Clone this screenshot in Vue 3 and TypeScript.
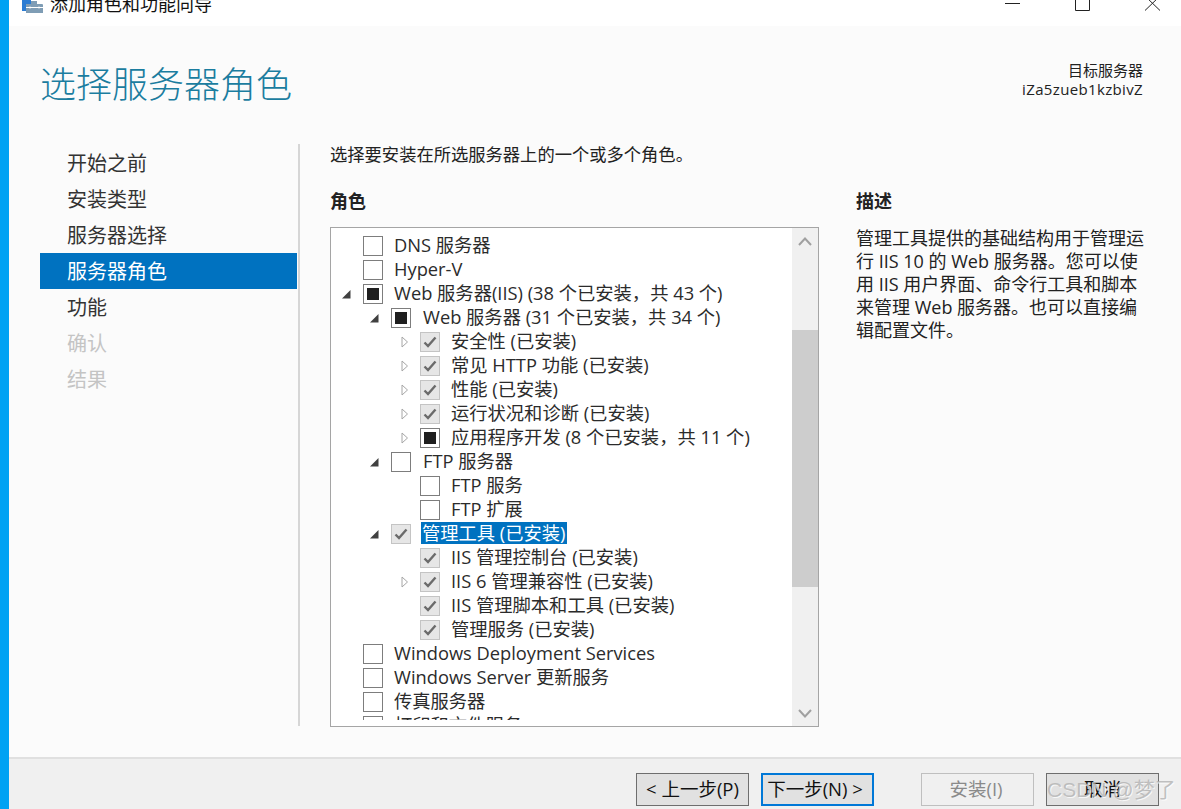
<script setup lang="ts">
type Row = { label: string; level: number; arrow?: 'open' | 'closed'; state: 'empty' | 'partial' | 'checked'; selected?: boolean }
const steps = [
  { t: '开始之前' }, { t: '安装类型' }, { t: '服务器选择' }, { t: '服务器角色', active: true },
  { t: '功能' }, { t: '确认', disabled: true }, { t: '结果', disabled: true },
]
const rows: Row[] = [
  { label: 'DNS 服务器', level: 0, state: 'empty' },
  { label: 'Hyper-V', level: 0, state: 'empty' },
  { label: 'Web 服务器(IIS) (38 个已安装，共 43 个)', level: 0, arrow: 'open', state: 'partial' },
  { label: 'Web 服务器 (31 个已安装，共 34 个)', level: 1, arrow: 'open', state: 'partial' },
  { label: '安全性 (已安装)', level: 2, arrow: 'closed', state: 'checked' },
  { label: '常见 HTTP 功能 (已安装)', level: 2, arrow: 'closed', state: 'checked' },
  { label: '性能 (已安装)', level: 2, arrow: 'closed', state: 'checked' },
  { label: '运行状况和诊断 (已安装)', level: 2, arrow: 'closed', state: 'checked' },
  { label: '应用程序开发 (8 个已安装，共 11 个)', level: 2, arrow: 'closed', state: 'partial' },
  { label: 'FTP 服务器', level: 1, arrow: 'open', state: 'empty' },
  { label: 'FTP 服务', level: 2, state: 'empty' },
  { label: 'FTP 扩展', level: 2, state: 'empty' },
  { label: '管理工具 (已安装)', level: 1, arrow: 'open', state: 'checked', selected: true },
  { label: 'IIS 管理控制台 (已安装)', level: 2, state: 'checked' },
  { label: 'IIS 6 管理兼容性 (已安装)', level: 2, arrow: 'closed', state: 'checked' },
  { label: 'IIS 管理脚本和工具 (已安装)', level: 2, state: 'checked' },
  { label: '管理服务 (已安装)', level: 2, state: 'checked' },
  { label: 'Windows Deployment Services', level: 0, state: 'empty' },
  { label: 'Windows Server 更新服务', level: 0, state: 'empty' },
  { label: '传真服务器', level: 0, state: 'empty' },
  { label: '打印和文件服务', level: 0, state: 'empty' },
]
</script>

<template>
  <div class="window">
    <header class="titlebar">
      <svg class="appicon" width="24" height="15" viewBox="0 0 24 15">
        <rect x="0" y="0" width="9" height="12" fill="#2b7cd3" />
        <path d="M4 5 h5 v-3 h6 v3 h5 a1 1 0 0 1 1 1 v8 h-17 z" fill="#7f9db5" />
        <path d="M4 8.500 h17" stroke="#fff" stroke-width="1" />
        <path d="M8 7.500 v2 M17 7.500 v2" stroke="#fff" stroke-width="1" />
      </svg>
      <span class="wintitle">添加角色和功能向导</span>
      <div class="controls">
        <svg width="16" height="12" viewBox="0 0 16 12"><path d="M2 3.500 h15" stroke="#222" fill="none" /></svg>
        <svg width="16" height="12" viewBox="0 0 16 12"><path d="M1.500 -4 h14 v14.500 h-14 z" stroke="#222" fill="none" /></svg>
        <svg width="16" height="12" viewBox="0 0 16 12"><path d="M0 -4 L15 10.500 M15 -4 L0 10.500" stroke="#222" fill="none" /></svg>
      </div>
    </header>

    <section class="head">
      <h1>选择服务器角色</h1>
      <div class="target">
        <div>目标服务器</div>
        <div class="server-id">iZa5zueb1kzbivZ</div>
      </div>
    </section>

    <main class="body">
      <nav class="steps">
        <div v-for="s in steps" :key="s.t" class="step" :class="{ active: s.active, disabled: s.disabled }">{{ s.t }}</div>
      </nav>
      <div class="content">
        <p class="intro">选择要安装在所选服务器上的一个或多个角色。</p>
        <div class="cols">
          <div class="rolecol">
            <h2>角色</h2>
            <div class="tree">
              <div class="rows">
                <div v-for="r in rows" :key="r.label" class="row" :class="'lv' + r.level">
                  <span class="arrow">
                    <svg v-if="r.arrow === 'open'" width="10" height="10" viewBox="0 0 10 10"><path d="M9.500 1 V9.500 H1 Z" fill="#404040" /></svg>
                    <svg v-else-if="r.arrow === 'closed'" class="closed" width="8" height="12" viewBox="0 0 8 12"><path d="M1 1 L6.500 6 L1 11 Z" fill="#fff" stroke="#a6a6a6" /></svg>
                  </span>
                  <span class="box" :class="r.state">
                    <i v-if="r.state === 'partial'" class="fill"></i>
                    <svg v-else-if="r.state === 'checked'" width="14" height="12" viewBox="0 0 14 12"><path d="M1.500 6.500 L5 10 L12.500 1.500" stroke="#6b6b6b" stroke-width="2.400" fill="none" /></svg>
                  </span>
                  <span class="label" :class="{ selected: r.selected }">{{ r.label }}</span>
                </div>
              </div>
              <div class="scroll">
                <div class="sbtn"><svg width="14" height="9" viewBox="0 0 14 9"><path d="M1 8 L7 1.500 L13 8" stroke="#a0a0a0" stroke-width="2" fill="none" /></svg></div>
                <div class="track"><div class="thumb"></div></div>
                <div class="sbtn"><svg width="14" height="9" viewBox="0 0 14 9"><path d="M1 1 L7 7.500 L13 1" stroke="#a0a0a0" stroke-width="2" fill="none" /></svg></div>
              </div>
            </div>
          </div>
          <div class="desc">
            <h2>描述</h2>
            <p>管理工具提供的基础结构用于管理运行 IIS 10 的 Web 服务器。您可以使用 IIS 用户界面、命令行工具和脚本来管理 Web 服务器。也可以直接编辑配置文件。</p>
          </div>
        </div>
      </div>
    </main>

    <footer class="foot">
      <button class="btn">&lt; 上一步(P)</button>
      <button class="btn default">下一步(N) &gt;</button>
      <button class="btn off">安装(I)</button>
      <button class="btn">取消</button>
      <span class="watermark">CSDN @梦了</span>
    </footer>
  </div>
</template>

<style>
html, body { margin: 0; overflow: hidden; }
</style>

<style scoped>
.window {
  width: 1181px;
  height: 809px;
  box-sizing: border-box;
  border-left: 9px solid #00a2f3;
  display: flex;
  flex-direction: column;
  background: #fbfbfb;
  color: #1a1a1a;
  font-family: "Open Sans", "Noto Sans CJK SC", sans-serif;
  overflow: hidden;
}
.titlebar {
  height: 26px;
  flex: none;
  background: #fff;
  display: flex;
  align-items: flex-end;
  padding-left: 13px;
  overflow: hidden;
  position: relative;
}
.appicon { margin-bottom: 12px; flex: none; }
.wintitle {
  font-size: 18px;
  line-height: 24px;
  margin-left: 4px;
  margin-bottom: 10px;
  color: #111;
}
.controls {
  margin-left: auto;
  display: flex;
  gap: 55px;
  padding-right: 20px;
  height: 26px;
  align-items: flex-start;
}
.controls svg { overflow: visible; }
.head {
  flex: none;
  height: 92px;
  display: flex;
  justify-content: space-between;
  padding: 0 38px 0 31px;
}
h1 {
  margin: 31px 0 0;
  font-size: 36px;
  line-height: 56px;
  font-weight: 300;
  color: #1b7d9f;
}
.target {
  margin-top: 35px;
  text-align: right;
  font-size: 15px;
  line-height: 19px;
  color: #222;
}
.server-id { letter-spacing: 0.35px; }
.body {
  flex: 1;
  display: flex;
  min-height: 0;
}
.steps {
  width: 257px;
  margin-left: 31px;
  margin-top: 27px;
  flex: none;
}
.step {
  height: 36px;
  line-height: 38px;
  padding-left: 27px;
  font-size: 20px;
  color: #333;
  overflow: hidden;
}
.step.active { background: #0072c0; color: #fff; }
.step.disabled { color: #c4c4c4; }
.content {
  margin-left: 1px;
  margin-top: 26px;
  height: 582px;
  border-left: 2px solid #d6d6d6;
  padding-left: 30px;
  flex: 1;
}
.intro {
  margin: 0;
  font-size: 17.300px;
  line-height: 22px;
  color: #222;
}
.cols { display: flex; margin-top: 24px; }
.rolecol { width: 489px; flex: none; }
h2 {
  margin: 0;
  font-size: 18px;
  line-height: 22px;
  font-weight: 700;
  color: #222;
}
.tree {
  margin-top: 15px;
  height: 500px;
  box-sizing: border-box;
  border: 1px solid #a5a5a5;
  background: #fff;
  display: flex;
}
.rows {
  flex: 1;
  padding-top: 6px;
  margin-bottom: 6px;
  min-width: 0;
  overflow: hidden;
}
.row {
  height: 24px;
  display: flex;
  align-items: center;
  font-size: 18.300px;
  white-space: nowrap;
  color: #2b2b2b;
}
.lv0 { padding-left: 9px; }
.lv1 { padding-left: 37px; }
.lv2 { padding-left: 66px; }
.arrow {
  width: 23px;
  height: 24px;
  flex: none;
  display: flex;
  align-items: center;
  padding-left: 1px;
  box-sizing: border-box;
}
.arrow .closed { margin-left: 3px; }
.box {
  width: 20px;
  height: 20px;
  box-sizing: border-box;
  border: 1px solid #7d7d7d;
  background: #fff;
  flex: none;
  display: flex;
  align-items: center;
  justify-content: center;
}
.box.checked { background: #e6e6e6; border-color: #c4c4c4; }
.fill { width: 12px; height: 12px; background: #1f1f1f; display: block; }
.label { margin: 0 0 2px 10px; padding: 0 1px; line-height: 24px; }
.lv1 .label { margin-left: 11px; }
.label.selected { background: #0072c0; color: #fff; height: 22px; line-height: 22px; margin-left: 10px; }
.scroll {
  width: 26px;
  flex: none;
  background: #f0f0f0;
  display: flex;
  flex-direction: column;
}
.sbtn {
  height: 26px;
  flex: none;
  display: flex;
  align-items: center;
  justify-content: center;
}
.track { flex: 1; padding-top: 76px; }
.thumb { height: 257px; background: #cdcdcd; }
.desc { width: 292px; margin-left: 37px; flex: none; }
.desc p {
  margin: 15px 0 0;
  font-size: 18px;
  line-height: 23px;
  color: #222;
}
.foot {
  flex: none;
  height: 52px;
  box-sizing: border-box;
  border-top: 2px solid #e0e0e0;
  background: #f0f0f0;
  display: flex;
  padding: 14px 0 0 627px;
  position: relative;
}
.btn {
  width: 113px;
  height: 33px;
  box-sizing: border-box;
  border: 1px solid #6e6e6e;
  background: #e1e1e1;
  color: #111;
  font-family: inherit;
  font-size: 18.500px;
  line-height: 1;
  padding: 0;
  margin-right: 12px;
}
.btn.default { border: 2px solid #0078d7; margin-right: 47px; padding-right: 5px; }
.btn.off { background: #f0f0f0; border-color: #bfbfbf; color: #8a8a8a; padding-right: 3px; }
.watermark {
  position: absolute;
  left: 1038px;
  top: 11px;
  font-family: "Liberation Sans", "Noto Sans CJK SC", sans-serif;
  font-size: 21px;
  line-height: 40px;
  color: rgba(175, 175, 175, 0.75);
  text-shadow: 1px 1px 0 rgba(255, 255, 255, 0.75);
  white-space: nowrap;
}
</style>
